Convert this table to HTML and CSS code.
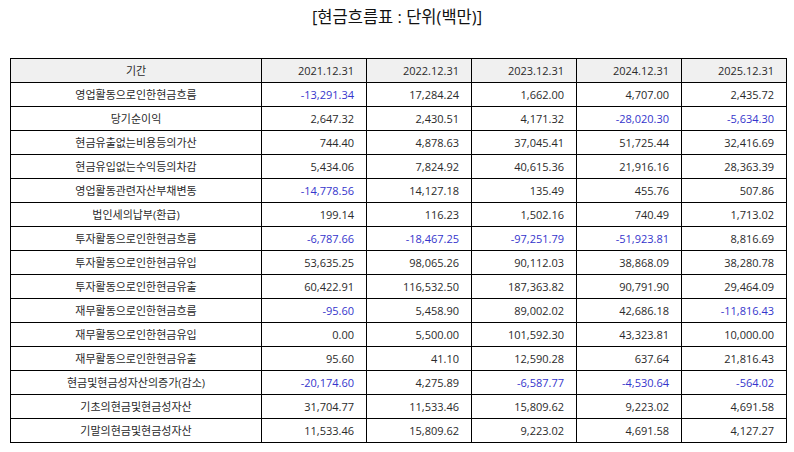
FILE: index.html
```html
<!DOCTYPE html>
<html lang="ko">
<head>
<meta charset="utf-8">
<link rel="stylesheet" href="styles.css">
</head>
<body>
<h1 class="title">[현금흐름표 : 단위(백만)]</h1>
<table class="cf">
<colgroup><col class="c-name"><col class="c-val"><col class="c-val"><col class="c-val"><col class="c-val"><col class="c-val"></colgroup>
<thead>
<tr><th class="name">기간</th><th>2021.12.31</th><th>2022.12.31</th><th>2023.12.31</th><th>2024.12.31</th><th>2025.12.31</th></tr>
</thead>
<tbody>
<tr><td class="name">영업활동으로인한현금흐름</td><td class="neg">-13,291.34</td><td>17,284.24</td><td>1,662.00</td><td>4,707.00</td><td>2,435.72</td></tr>
<tr><td class="name">당기순이익</td><td>2,647.32</td><td>2,430.51</td><td>4,171.32</td><td class="neg">-28,020.30</td><td class="neg">-5,634.30</td></tr>
<tr><td class="name">현금유출없는비용등의가산</td><td>744.40</td><td>4,878.63</td><td>37,045.41</td><td>51,725.44</td><td>32,416.69</td></tr>
<tr><td class="name">현금유입없는수익등의차감</td><td>5,434.06</td><td>7,824.92</td><td>40,615.36</td><td>21,916.16</td><td>28,363.39</td></tr>
<tr><td class="name">영업활동관련자산부채변동</td><td class="neg">-14,778.56</td><td>14,127.18</td><td>135.49</td><td>455.76</td><td>507.86</td></tr>
<tr><td class="name">법인세의납부(환급)</td><td>199.14</td><td>116.23</td><td>1,502.16</td><td>740.49</td><td>1,713.02</td></tr>
<tr><td class="name">투자활동으로인한현금흐름</td><td class="neg">-6,787.66</td><td class="neg">-18,467.25</td><td class="neg">-97,251.79</td><td class="neg">-51,923.81</td><td>8,816.69</td></tr>
<tr><td class="name">투자활동으로인한현금유입</td><td>53,635.25</td><td>98,065.26</td><td>90,112.03</td><td>38,868.09</td><td>38,280.78</td></tr>
<tr><td class="name">투자활동으로인한현금유출</td><td>60,422.91</td><td>116,532.50</td><td>187,363.82</td><td>90,791.90</td><td>29,464.09</td></tr>
<tr><td class="name">재무활동으로인한현금흐름</td><td class="neg">-95.60</td><td>5,458.90</td><td>89,002.02</td><td>42,686.18</td><td class="neg">-11,816.43</td></tr>
<tr><td class="name">재무활동으로인한현금유입</td><td>0.00</td><td>5,500.00</td><td>101,592.30</td><td>43,323.81</td><td>10,000.00</td></tr>
<tr><td class="name">재무활동으로인한현금유출</td><td>95.60</td><td>41.10</td><td>12,590.28</td><td>637.64</td><td>21,816.43</td></tr>
<tr><td class="name">현금및현금성자산의증가(감소)</td><td class="neg">-20,174.60</td><td>4,275.89</td><td class="neg">-6,587.77</td><td class="neg">-4,530.64</td><td class="neg">-564.02</td></tr>
<tr><td class="name">기초의현금및현금성자산</td><td>31,704.77</td><td>11,533.46</td><td>15,809.62</td><td>9,223.02</td><td>4,691.58</td></tr>
<tr><td class="name">기말의현금및현금성자산</td><td>11,533.46</td><td>15,809.62</td><td>9,223.02</td><td>4,691.58</td><td>4,127.27</td></tr>
</tbody>
</table>
</body>
</html>
```
FILE: styles.css
```css
html, body {
  margin: 0;
  padding: 0;
  background: #ffffff;
}
body {
  font-family: "Open Sans", "Noto Sans CJK KR", sans-serif;
  color: #222222;
}
.title {
  margin: 0;
  height: 36px;
  line-height: 34px;
  font-size: 16.5px;
  font-weight: normal;
  text-align: center;
  color: #111111;
}
.cf {
  margin: 22px 0 0 10px;
  width: 776px;
  border-collapse: collapse;
  table-layout: fixed;
  font-size: 11px;
}
.c-name { width: 251px; }
.c-val { width: 105px; }
.cf th, .cf td {
  border: 1px solid #000000;
  height: 23px;
  padding: 0 12px 0 4px;
  text-align: right;
  white-space: nowrap;
  line-height: 14px;
  color: #2a2a2a;
}
.cf th {
  background: #f0f0f0;
  font-weight: normal;
}
.cf .name {
  text-align: center;
  padding: 0 4px;
}
.cf .neg {
  color: #3535cc;
}
```
